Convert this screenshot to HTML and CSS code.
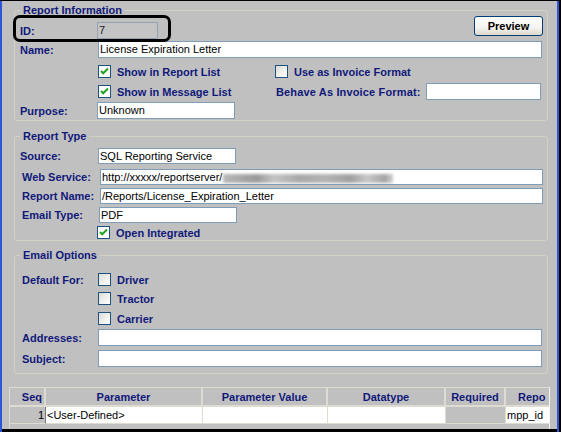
FILE: index.html
```html
<!DOCTYPE html>
<html>
<head>
<meta charset="utf-8">
<link rel="stylesheet" href="styles.css">
</head>
<body>
<div class="window">
  <fieldset class="group g1">
    <legend>Report Information</legend>
    <div class="body b1">
      <div class="row r-id">
        <span class="lbl">ID:</span>
        <span class="inp disabled w-id nudge-l">7</span>
        <button class="btn">Preview</button>
      </div>
      <div class="row r-name">
        <span class="lbl">Name:</span>
        <span class="inp w-full">License Expiration Letter</span>
      </div>
      <div class="row r-chk1">
        <span class="lbl"></span>
        <span class="chkitem wide"><span class="cb on"><svg viewBox="0 0 13 13" width="13" height="13"><path d="M3 6 L5.2 8.3 L10 3.5" fill="none" stroke="#21a121" stroke-width="2"/></svg></span><span class="clbl">Show in Report List</span></span>
        <span class="chkitem"><span class="cb"></span><span class="clbl">Use as Invoice Format</span></span>
      </div>
      <div class="row r-chk2">
        <span class="lbl"></span>
        <span class="chkitem wide"><span class="cb on"><svg viewBox="0 0 13 13" width="13" height="13"><path d="M3 6 L5.2 8.3 L10 3.5" fill="none" stroke="#21a121" stroke-width="2"/></svg></span><span class="clbl">Show in Message List</span></span>
        <span class="clbl behave">Behave As Invoice Format:</span>
        <span class="inp w-behave"></span>
      </div>
      <div class="row r-purpose">
        <span class="lbl">Purpose:</span>
        <span class="inp w-short nudge-l">Unknown</span>
      </div>
    </div>
  </fieldset>

  <fieldset class="group g2">
    <legend>Report Type</legend>
    <div class="body b2">
      <div class="row r-source">
        <span class="lbl src">Source:</span>
        <span class="inp w-short h16">SQL Reporting Service</span>
      </div>
      <div class="row r-web">
        <span class="lbl">Web Service:</span>
        <span class="inp w-wide h16 nudge-r">http://xxxxx/reportserver/<span class="blur"></span></span>
      </div>
      <div class="row r-rname">
        <span class="lbl">Report Name:</span>
        <span class="inp w-wide h16 nudge-r">/Reports/License_Expiration_Letter</span>
      </div>
      <div class="row r-etype">
        <span class="lbl">Email Type:</span>
        <span class="inp w-short h16 nudge-r1">PDF</span>
      </div>
      <div class="row r-open">
        <span class="lbl"></span>
        <span class="chkitem nudge-l"><span class="cb on"><svg viewBox="0 0 13 13" width="13" height="13"><path d="M3 6 L5.2 8.3 L10 3.5" fill="none" stroke="#21a121" stroke-width="2"/></svg></span><span class="clbl">Open Integrated</span></span>
      </div>
    </div>
  </fieldset>

  <fieldset class="group g3">
    <legend>Email Options</legend>
    <div class="body b3">
      <div class="row r-driver">
        <span class="lbl">Default For:</span>
        <span class="chkitem"><span class="cb"></span><span class="clbl">Driver</span></span>
      </div>
      <div class="row r-tractor">
        <span class="lbl"></span>
        <span class="chkitem"><span class="cb"></span><span class="clbl">Tractor</span></span>
      </div>
      <div class="row r-carrier">
        <span class="lbl"></span>
        <span class="chkitem"><span class="cb"></span><span class="clbl">Carrier</span></span>
      </div>
      <div class="row r-addr">
        <span class="lbl">Addresses:</span>
        <span class="inp w-full"></span>
      </div>
      <div class="row r-subj">
        <span class="lbl">Subject:</span>
        <span class="inp w-full"></span>
      </div>
    </div>
  </fieldset>

  <div class="grid">
    <table>
      <colgroup>
        <col class="c-seq"><col class="c-param"><col class="c-val"><col class="c-dt"><col class="c-req"><col class="c-rep">
      </colgroup>
      <thead>
        <tr>
          <th class="seq">Seq</th>
          <th>Parameter</th>
          <th>Parameter Value</th>
          <th>Datatype</th>
          <th>Required</th>
          <th class="rep">Repo</th>
        </tr>
      </thead>
      <tbody>
        <tr>
          <td class="seq grey">1</td>
          <td class="white">&lt;User-Defined&gt;</td>
          <td class="white"></td>
          <td class="white"></td>
          <td class="grey"></td>
          <td class="white last">mpp_id</td>
        </tr>
      </tbody>
    </table>
  </div>

  <div class="callout"></div>
</div>
</body>
</html>
```

FILE: styles.css
```css
html, body {
  margin: 0;
  padding: 0;
}

body {
  font-family: "Liberation Sans", Arial, sans-serif;
  font-size: 11px;
  background: #c0c0c0;
}

.window {
  position: relative;
  width: 561px;
  height: 432px;
  box-sizing: border-box;
  padding-top: 4px;
  background: #c0c0c0;
  overflow: hidden;
  box-shadow:
    inset 0 1px 0 #000,
    inset 2px 0 0 #2a58d4,
    inset -2px 0 0 #000,
    inset -4px 0 0 #2a58d4,
    inset 0 -3px 0 #000;
}

.group {
  margin: 0 0 0 14px;
  padding: 0;
  min-width: 0;
  width: 534px;
  box-sizing: border-box;
  border: 1px solid #d3d2c2;
  border-radius: 3px;
}

.group legend {
  margin-left: 5px;
  padding: 0 3px;
  font-weight: bold;
  color: #10197a;
  line-height: 13px;
  font-size: 11px;
}

.body {
  padding-left: 5px;
}

.b1 { padding-bottom: 1px; }
.b2 { padding-left: 7px; padding-bottom: 1px; }
.b3 { padding-left: 7px; padding-bottom: 6px; }

.g2 { margin-top: 9px; }
.g3 { margin-top: 8px; }

.row {
  display: flex;
  align-items: center;
}

.lbl {
  flex: none;
  width: 78px;
  font-weight: bold;
  color: #10197a;
  white-space: nowrap;
}

.b2 .lbl, .b3 .lbl { width: 76px; }
.b2 .lbl.src { margin-left: -2px; width: 78px; }

.inp {
  flex: none;
  box-sizing: border-box;
  height: 17px;
  line-height: 15px;
  padding: 0 1px;
  border: 1px solid #7f9db9;
  background: #fff;
  color: #000;
  white-space: nowrap;
  overflow: hidden;
}

.h16 { height: 16px; line-height: 14px; }

.disabled {
  background: #c4c4c4;
  border-color: #92a2b4;
  color: #222;
}

.nudge-l { margin-left: -1px; }
.nudge-r { margin-left: 2px; }
.nudge-r1 { margin-left: 1px; }

.w-id { width: 61px; }
.w-full { width: 444px; }
.w-wide { width: 443px; }
.w-short { width: 138px; }
.w-behave { width: 115px; }

.blur {
  display: inline-block;
  vertical-align: middle;
  width: 170px;
  height: 9px;
  margin-left: 1px;
  background: linear-gradient(90deg, #b8b8b8, #9a9a9a 20%, #c4c4c4 30%, #a8a8a8 45%, #b4b4b4 60%, #a0a0a0 75%, #c8c8c8 85%, #a4a4a4 95%, #d0d0d0);
  filter: blur(1.5px);
}

.btn {
  flex: none;
  margin: -6px 4px 0 auto;
  align-self: flex-start;
  width: 69px;
  height: 20px;
  padding: 0;
  border: 1px solid #003c74;
  border-radius: 3px;
  background: linear-gradient(#ffffff, #f4f3ee 60%, #dcd8cc);
  font-family: "Liberation Sans", Arial, sans-serif;
  font-size: 11px;
  font-weight: bold;
  color: #000;
}

.r-id { margin-top: 5px; height: 17px; }
.r-name { margin-top: 2px; height: 17px; }
.r-chk1 { margin-top: 7px; height: 13px; }
.r-chk2 { margin-top: 5px; height: 17px; }
.r-purpose { margin-top: 2px; height: 17px; }

.r-source { margin-top: 5px; height: 16px; }
.r-web { margin-top: 5px; height: 16px; }
.r-rname { margin-top: 3px; height: 16px; }
.r-etype { margin-top: 3px; height: 16px; }
.r-open { margin-top: 3px; height: 13px; }

.r-driver { margin-top: 11px; height: 13px; }
.r-tractor { margin-top: 6px; height: 13px; }
.r-carrier { margin-top: 7px; height: 13px; }
.r-addr { margin-top: 4px; height: 17px; }
.r-subj { margin-top: 4px; height: 17px; }

.chkitem {
  display: flex;
  align-items: center;
  flex: none;
}

.chkitem.wide { width: 177px; }

.cb {
  flex: none;
  box-sizing: border-box;
  width: 13px;
  height: 13px;
  border: 1px solid #1c5180;
  background: linear-gradient(135deg, #dcdcd6, #f6f6f4 70%, #ffffff);
  position: relative;
}

.cb.on { background: #fff; }

.cb svg {
  position: absolute;
  left: -1px;
  top: -1px;
}

.clbl {
  margin-left: 6px;
  font-weight: bold;
  color: #10197a;
  white-space: nowrap;
}

.behave {
  flex: none;
  width: 150px;
  margin-left: 1px;
  letter-spacing: 0.15px;
}

.grid {
  margin: 13px 0 0 9px;
  width: 541px;
  height: 42px;
  box-sizing: border-box;
  border-top: 1px solid #dedcd2;
  border-left: 1px solid #dedcd2;
  border-right: 1px solid #f4f4f2;
  overflow: hidden;
}

.grid table {
  table-layout: fixed;
  border-collapse: separate;
  border-spacing: 0;
  width: 539px;
}

.c-seq { width: 36px; }
.c-param { width: 157px; }
.c-val { width: 125px; }
.c-dt { width: 118px; }
.c-req { width: 60px; }
.c-rep { width: 43px; }

.grid th, .grid td {
  padding: 0 2px;
  white-space: nowrap;
  overflow: hidden;
  box-sizing: border-box;
}

.grid th {
  height: 19px;
  font-weight: bold;
  color: #10197a;
  text-align: center;
  border-right: 2px solid #dedcd2;
  border-bottom: 2px solid #dedcd2;
}

.grid th.seq { text-align: right; }
.grid th.rep {
  text-align: left;
  padding-left: 12px;
  border-right: 0;
}

.grid td {
  height: 17px;
  color: #000;
  padding: 0 1px;
  border-right: 1px solid #dedcd2;
  border-bottom: 1px solid #dedcd2;
}

.grid td.seq { text-align: right; border-right: 1px solid #7a7a7a; }
.grid td.white { background: #fff; }
.grid td.grey { background: #c0c0c0; }
.grid td.last { border-right: 0; }

.callout {
  position: absolute;
  left: 13px;
  top: 15px;
  width: 158px;
  height: 27px;
  box-sizing: border-box;
  border: 3px solid #000;
  border-radius: 7px;
}
```
